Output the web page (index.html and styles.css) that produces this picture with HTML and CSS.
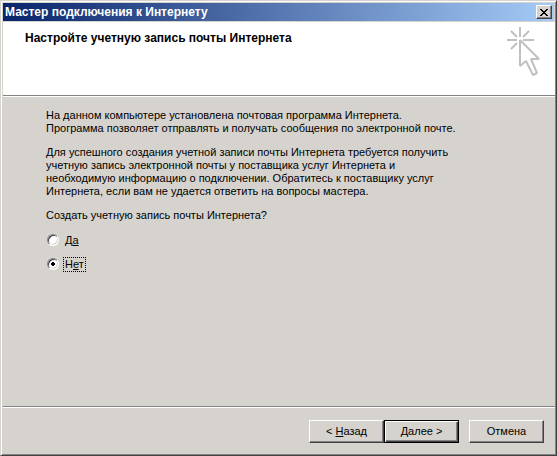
FILE: index.html
```html
<!DOCTYPE html>
<html lang="ru">

<head>
    <meta charset="UTF-8">
    <meta name="viewport" content="width=device-width, initial-scale=1.0">
    <title>Мастер подключения к Интернету</title>
    <link rel="stylesheet" href="styles.css">
</head>

<body>
    <form class="window">
        <!-- Заголовок окна -->
        <div class="title-bar">
            <span class="title">Мастер подключения к Интернету</span>
            <button type="button" class="close" aria-label="Закрыть">
                <svg width="8" height="7" viewBox="0 0 8 7" shape-rendering="crispEdges">
                    <path d="M0 0h2v1h1v1h2v-1h1v-1h2v1h-1v1h-1v1h-1v1h1v1h1v1h1v1h-2v-1h-1v-1h-2v1h-1v1h-2v-1h1v-1h1v-1h1v-1h-1v-1h-1v-1h-1z" fill="#000"/>
                </svg>
            </button>
        </div>

        <!-- Шапка мастера -->
        <div class="header">
            <h1>Настройте учетную запись почты Интернета</h1>
            <svg class="logo" width="34" height="50" viewBox="0 0 34 50" fill="none" stroke="#c0c0c0" stroke-width="2" stroke-linejoin="bevel">
                <path d="M13 0v10M0 13h10M16 13h11M4 4l6 6M22 4l-6 6M4 22l6-6"/>
                <path d="M13 13V39L19 34L26 48L30 46L24 32H32Z"/>
            </svg>
        </div>

        <!-- Содержимое -->
        <div class="content">
            <p>На данном компьютере установлена почтовая программа Интернета.<br>
                Программа позволяет отправлять и получать сообщения по электронной почте.</p>
            <p>Для успешного создания учетной записи почты Интернета требуется получить<br>
                учетную запись электронной почты у поставщика услуг Интернета и<br>
                необходимую информацию о подключении. Обратитесь к поставщику услуг<br>
                Интернета, если вам не удается ответить на вопросы мастера.</p>
            <fieldset>
                <legend>Создать учетную запись почты Интернета?</legend>
                <div class="option">
                    <input type="radio" name="account" id="yes">
                    <label for="yes">Д<u>а</u></label>
                </div>
                <div class="option">
                    <input type="radio" name="account" id="no" checked>
                    <label for="no" class="focused">Н<u>е</u>т</label>
                </div>
            </fieldset>
        </div>

        <!-- Кнопки -->
        <div class="footer">
            <button type="button">&lt; <u>Н</u>азад</button>
            <button type="button" class="default">Далее &gt;</button>
            <button type="button" class="cancel">Отмена</button>
        </div>
    </form>
</body>

</html>
```
FILE: styles.css
```css
* {
    box-sizing: border-box;
}

body {
    margin: 0;
    background-color: #d6d3ce;
    color: #000;
    font: 11px/13px "Liberation Sans", Arial, sans-serif;
}

/* Окно */
.window {
    display: flex;
    flex-direction: column;
    min-height: 100vh;
    padding: 2px 1px 1px 2px;
    border: 1px solid #d6d3ce;
    border-right-color: #424142;
    border-bottom-color: #424142;
    box-shadow: inset 1px 1px #fff, inset -1px -1px #848284;
}

/* Заголовок окна */
.title-bar {
    display: flex;
    align-items: center;
    justify-content: space-between;
    height: 18px;
    margin-right: 1px;
    padding: 0 2px;
    background: linear-gradient(to right, #08246b, #a5cbf7);
    color: #fff;
}

.title {
    font: bold 12px/13px "Liberation Sans", Arial, sans-serif;
}

/* Кнопки */
button {
    padding: 0;
    border: 1px solid #fff;
    border-right-color: #424142;
    border-bottom-color: #424142;
    border-radius: 0;
    background-color: #d6d3ce;
    box-shadow: inset -1px -1px #848284;
    color: #000;
    font: inherit;
}

.close {
    display: flex;
    align-items: center;
    justify-content: center;
    width: 16px;
    height: 14px;
}

/* Шапка мастера */
.header {
    display: flex;
    align-items: flex-start;
    justify-content: space-between;
    height: 74px;
    margin-top: 1px;
    padding: 5px 14px 0 22px;
    border-bottom: 1px solid #848284;
    background-color: #fff;
    box-shadow: 0 1px #fff;
}

h1 {
    margin: 5px 0 0;
    font: bold 12px/13px "Liberation Sans", Arial, sans-serif;
}

/* Содержимое */
.content {
    flex: 1;
    padding: 13px 43px;
}

p {
    margin: 0 0 11px;
}

fieldset {
    margin: 0;
    padding: 0;
    border: 0;
}

legend {
    margin-bottom: 10px;
    padding: 0;
}

.option {
    display: flex;
    align-items: center;
    gap: 4px;
    height: 16px;
    margin-bottom: 8px;
    padding-left: 1px;
}

.option label {
    padding: 0 1px;
    border: 1px solid transparent;
}

.option .focused {
    border: 1px dotted #000;
}

.option input {
    appearance: none;
    width: 12px;
    height: 12px;
    margin: 0;
    border: 1px solid;
    border-color: #848284 #fff #fff #848284;
    border-radius: 50%;
    background-color: #fff;
    box-shadow: inset 1px 1px #424142, inset -1px -1px #d6d3ce;
}

.option input:checked {
    background-image: radial-gradient(circle, #000 2px, transparent 2px);
}

/* Нижняя панель */
.footer {
    display: flex;
    justify-content: flex-end;
    padding: 13px 11px 11px 0;
    border-top: 1px solid #848284;
    box-shadow: inset 0 1px #fff;
}

.footer button {
    width: 75px;
    height: 23px;
}

.footer .default {
    border-color: #000;
    box-shadow: inset 1px 1px #fff, inset -1px -1px #424142, inset -2px -2px #848284;
}

.footer .cancel {
    margin-left: 10px;
}
```
